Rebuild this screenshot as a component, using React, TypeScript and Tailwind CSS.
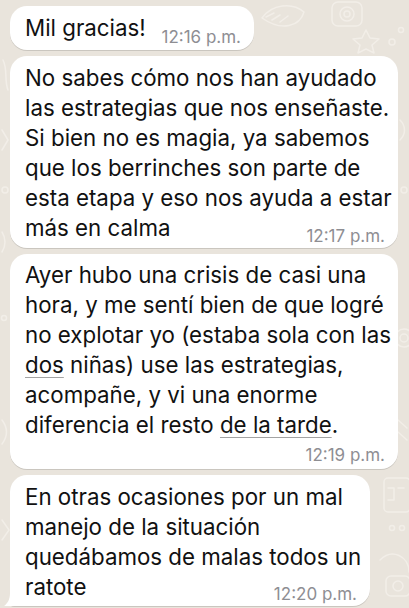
import React from "react";

const font = "font-['Inter','Noto_Sans',sans-serif]";
const stamp = "text-[17px] leading-[20px] text-[#8e8e93] whitespace-nowrap";
const line = "block whitespace-nowrap";
const under = "underline decoration-[#a3a3a3] decoration-1 underline-offset-[4px]";

function Doodles() {
  // faint wallpaper pattern behind the bubbles
  return (
    <svg
      className="absolute inset-0 h-full w-full pointer-events-none"
      viewBox="0 0 409 608"
      fill="none"
      stroke="#f2eee8"
      strokeWidth="1.5"
      strokeLinecap="round"
      strokeLinejoin="round"
    >
      <path d="M262 18 C272 4 292 2 304 12 C300 26 282 32 262 18 Z" />
      <path d="M266 17 L274 13 M272 20 L280 15 M280 22 L288 16" />
      <rect x="332" y="2" width="30" height="24" rx="6" />
      <circle cx="347" cy="14" r="7" />
      <circle cx="347" cy="14" r="3" />
      <path d="M366 30 L370 38 L379 39 L372 45 L374 53 L366 49 L358 53 L360 45 L353 39 L362 38 Z" />
      <circle cx="392" cy="42" r="3" />
      <circle cx="401" cy="30" r="2.5" />
      <path d="M3 60 C8 70 4 80 8 90" />
      <path d="M2 130 L8 140 L2 150" />
      <circle cx="5" cy="190" r="3" />
      <path d="M2 232 C6 238 6 246 2 252" />
      <circle cx="4" cy="318" r="2.5" />
      <path d="M400 120 C406 126 406 134 400 140" />
      <circle cx="404" cy="190" r="3" />
      <circle cx="404" cy="338" r="9" />
      <circle cx="404" cy="338" r="4" />
      <path d="M398 420 L407 428 M398 432 L407 440" />
      <rect x="384" y="478" width="26" height="34" rx="4" />
      <path d="M388 488 L394 488 L394 500 L388 500 M398 488 L404 488" />
      <circle cx="392" cy="528" r="2.5" />
      <circle cx="402" cy="528" r="2.5" />
      <path d="M380 560 C392 548 409 556 409 572" />
      <rect x="386" y="576" width="24" height="20" rx="5" />
      <circle cx="398" cy="586" r="5" />
      <path d="M2 420 C8 428 8 436 2 444" />
      <path d="M2 520 L9 530 L2 540" />
    </svg>
  );
}

function Bubble({ w, tail, children }: { w: string; tail?: boolean; children: React.ReactNode }) {
  return (
    <div
      className={`relative ${w} bg-white rounded-[17px] ${tail ? "rounded-bl-[4px]" : ""} shadow-[0_1px_0.5px_rgba(0,0,0,0.13)] pl-[15px] pr-[13px]`}
    >
      {tail && (
        <svg className="absolute left-[-7px] bottom-0" width="14" height="17" viewBox="0 0 14 17">
          <path d="M14 0 L14 17 L1 17 C4 15 7 11 7 4 L7 0 Z" fill="#ffffff" />
        </svg>
      )}
      {children}
    </div>
  );
}

export default function App() {
  return (
    <div className={`relative w-[409px] h-[608px] overflow-hidden bg-[#e9e4dc] ${font} text-[22.3px] leading-[30px] text-[#111111]`}>
      <Doodles />
      <div className="relative flex flex-col items-start gap-[6px] pl-[10px] pt-[6px]">
        {/* Mil gracias */}
        <Bubble w="w-[244px]">
          <div className="flex items-end justify-between pt-[7px] pb-[7px]">
            <span className={line}>Mil gracias!</span>
            <span className={`${stamp} -mb-[4px]`}>12:16 p.m.</span>
          </div>
        </Bubble>

        <Bubble w="w-[388px]">
          <div className="pt-[7px] pb-[5px]">
            <span className={line}>No sabes cómo nos han ayudado</span>
            <span className={line}>las estrategias que nos enseñaste.</span>
            <span className={line}>Si bien no es magia, ya sabemos</span>
            <span className={line}>que los berrinches son parte de</span>
            <span className={line}>esta etapa y eso nos ayuda a estar</span>
            <div className="flex items-end justify-between">
              <span className={line}>más en calma</span>
              <span className={`${stamp} -mb-[3px]`}>12:17 p.m.</span>
            </div>
          </div>
        </Bubble>

        <Bubble w="w-[388px]">
          <div className="pt-[6px] pb-[4px]">
            <span className={line}>Ayer hubo una crisis de casi una</span>
            <span className={line}>hora, y me sentí bien de que logré</span>
            <span className={line}>no explotar yo (estaba sola con las</span>
            <span className={line}>
              <span className={under}>dos</span> niñas) use las estrategias,
            </span>
            <span className={line}>acompañe, y vi una enorme</span>
            <span className={line}>
              diferencia el resto <span className={under}>de la tarde</span>.
            </span>
            <div className="mt-[5px] flex justify-end">
              <span className={stamp}>12:19 p.m.</span>
            </div>
          </div>
        </Bubble>

        <Bubble w="w-[360px]" tail>
          <div className="pt-[7px] pb-[4px]">
            <span className={line}>En otras ocasiones por un mal</span>
            <span className={line}>manejo de la situación</span>
            <span className={line}>quedábamos de malas todos un</span>
            <div className="flex items-end justify-between">
              <span className={line}>ratote</span>
              <span className={`${stamp} -mb-[2px]`}>12:20 p.m.</span>
            </div>
          </div>
        </Bubble>
      </div>
    </div>
  );
}
